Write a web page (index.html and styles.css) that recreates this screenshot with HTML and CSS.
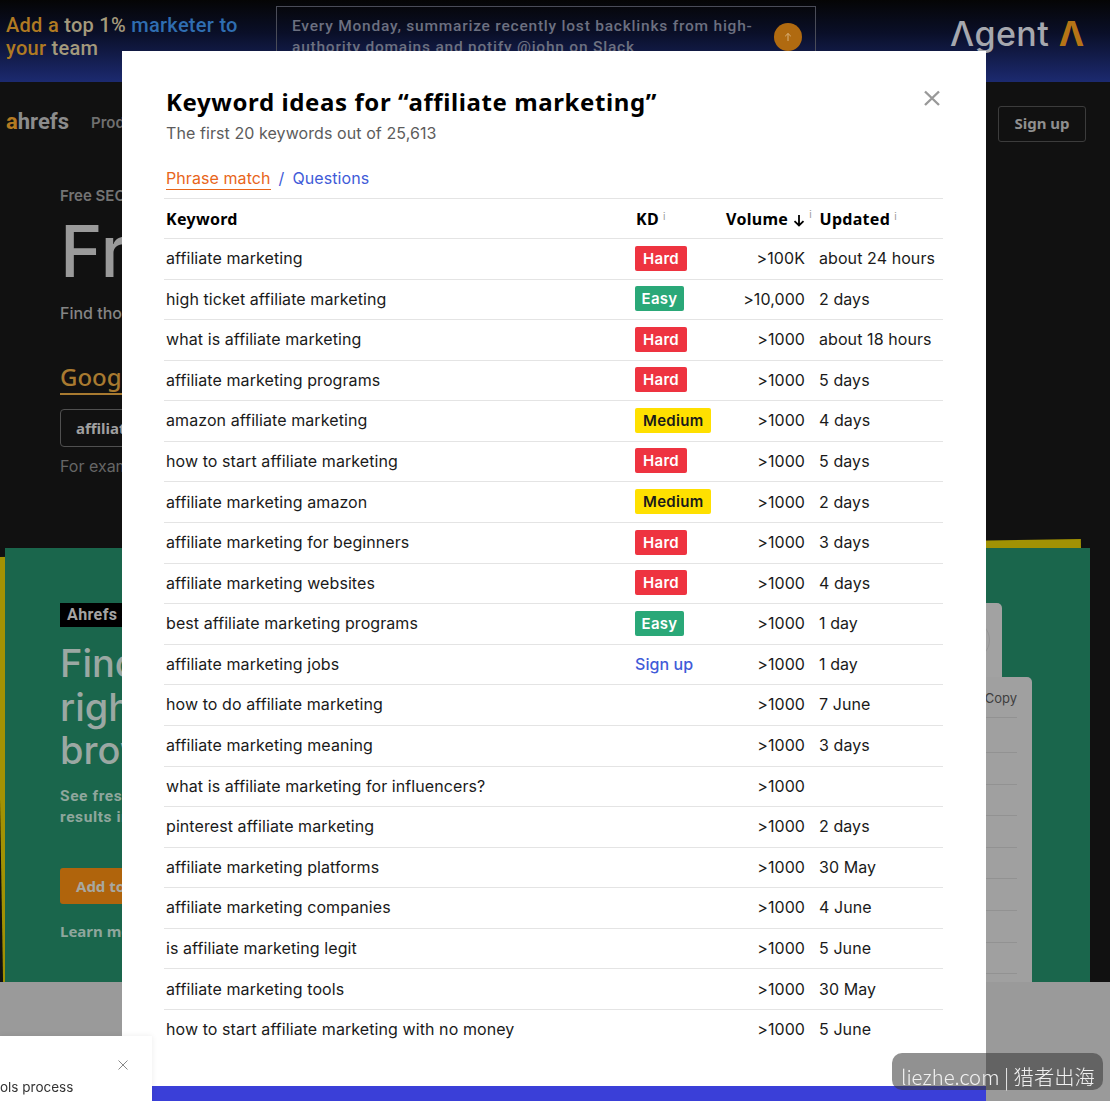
FILE: index.html
```html
<!DOCTYPE html>
<html lang="en">
<head>
<meta charset="utf-8">
<title>Keyword ideas</title>
<link rel="stylesheet" href="styles.css">
</head>
<body>
<div class="page">
  <header class="banner">
    <p class="banner-text"><span class="c-amber">Add a</span> <span class="c-sand">top 1%</span> <span class="c-blue">marketer to</span><br><span class="c-amber">your</span> <span class="c-sand">team</span></p>
    <div class="prompt">
      <p>Every Monday, summarize recently lost backlinks from high-authority domains and notify @john on Slack</p>
      <span class="prompt-send"><svg width="10" height="10" viewBox="0 0 10 10"><path d="M5 9V1.5M2.2 4.2 5 1.5l2.8 2.7" fill="none" stroke="#d9b27a" stroke-width="1"/></svg></span>
    </div>
    <div class="agent"><span>Λgent</span> <span class="agent-mark">Λ</span></div>
  </header>
  <nav class="nav">
    <div class="logo"><span class="logo-a">a</span>hrefs</div>
    <span class="nav-link">Products</span>
    <a class="signup">Sign up</a>
  </nav>
  <section class="hero">
    <p class="eyebrow">Free SEO Tools</p>
    <h1>Free Keyword Generator</h1>
    <p class="lead">Find thousands of keyword ideas</p>
    <div class="tabs"><span class="tab">Google</span></div>
    <div class="search">affiliate marketing</div>
    <p class="hint">For example, enter a word</p>
  </section>
  <section class="promo">
    <div class="promo-back"></div>
    <div class="promo-card">
      <div class="promo-copy">
        <span class="tag">Ahrefs SEO Toolbar</span>
        <h2>Find the<br>right data in<br>browser</h2>
        <p class="promo-text">See fresh data in your<br>results in real time</p>
        <a class="add">Add to Chrome</a>
        <a class="learn">Learn more</a>
      </div>
      <div class="shots">
        <div class="shot-small"><span class="shot-ring"></span></div>
        <div class="shot-large">
          <div class="shot-head">Copy</div>
          <div class="shot-row"></div><div class="shot-row"></div><div class="shot-row"></div><div class="shot-row"></div><div class="shot-row"></div>
          <div class="shot-row"></div><div class="shot-row"></div><div class="shot-row"></div><div class="shot-row"></div>
        </div>
      </div>
    </div>
  </section>
  <div class="footer-band"></div>
</div>

<div class="modal">
  <div class="modal-body">
    <div class="modal-head">
      <div>
        <h3>Keyword ideas for “affiliate marketing”</h3>
        <p class="sub">The first 20 keywords out of 25,613</p>
      </div>
      <svg class="close" width="16" height="16" viewBox="0 0 16 16"><path d="M1 1.5 15 15M15 1.5 1 15" stroke="#999" stroke-width="2.4" fill="none"/></svg>
    </div>
    <div class="filters"><a class="f-active">Phrase match</a><span class="f-sep">/</span><a class="f-link">Questions</a></div>
    <table class="kw">
      <thead>
        <tr><th class="col-k">Keyword</th><th class="col-d">KD<i class="info">i</i></th><th class="col-v">Volume <svg class="sort" width="12" height="13" viewBox="0 0 12 13"><path d="M6 1v10.5M1.5 7.2 6 11.5l4.500-4.300" fill="none" stroke="#000" stroke-width="1.800"/></svg><i class="info abs">i</i></th><th class="col-u">Updated<i class="info">i</i></th></tr>
      </thead>
      <tbody>
        <tr><td>affiliate marketing</td><td><span class="b hard">Hard</span></td><td class="v">&gt;100K</td><td>about 24 hours</td></tr>
        <tr><td>high ticket affiliate marketing</td><td><span class="b easy">Easy</span></td><td class="v">&gt;10,000</td><td>2 days</td></tr>
        <tr><td>what is affiliate marketing</td><td><span class="b hard">Hard</span></td><td class="v">&gt;1000</td><td>about 18 hours</td></tr>
        <tr><td>affiliate marketing programs</td><td><span class="b hard">Hard</span></td><td class="v">&gt;1000</td><td>5 days</td></tr>
        <tr><td>amazon affiliate marketing</td><td><span class="b med">Medium</span></td><td class="v">&gt;1000</td><td>4 days</td></tr>
        <tr><td>how to start affiliate marketing</td><td><span class="b hard">Hard</span></td><td class="v">&gt;1000</td><td>5 days</td></tr>
        <tr><td>affiliate marketing amazon</td><td><span class="b med">Medium</span></td><td class="v">&gt;1000</td><td>2 days</td></tr>
        <tr><td>affiliate marketing for beginners</td><td><span class="b hard">Hard</span></td><td class="v">&gt;1000</td><td>3 days</td></tr>
        <tr><td>affiliate marketing websites</td><td><span class="b hard">Hard</span></td><td class="v">&gt;1000</td><td>4 days</td></tr>
        <tr><td>best affiliate marketing programs</td><td><span class="b easy">Easy</span></td><td class="v">&gt;1000</td><td>1 day</td></tr>
        <tr><td>affiliate marketing jobs</td><td><a class="su">Sign up</a></td><td class="v">&gt;1000</td><td>1 day</td></tr>
        <tr><td>how to do affiliate marketing</td><td></td><td class="v">&gt;1000</td><td>7 June</td></tr>
        <tr><td>affiliate marketing meaning</td><td></td><td class="v">&gt;1000</td><td>3 days</td></tr>
        <tr><td>what is affiliate marketing for influencers?</td><td></td><td class="v">&gt;1000</td><td></td></tr>
        <tr><td>pinterest affiliate marketing</td><td></td><td class="v">&gt;1000</td><td>2 days</td></tr>
        <tr><td>affiliate marketing platforms</td><td></td><td class="v">&gt;1000</td><td>30 May</td></tr>
        <tr><td>affiliate marketing companies</td><td></td><td class="v">&gt;1000</td><td>4 June</td></tr>
        <tr><td>is affiliate marketing legit</td><td></td><td class="v">&gt;1000</td><td>5 June</td></tr>
        <tr><td>affiliate marketing tools</td><td></td><td class="v">&gt;1000</td><td>30 May</td></tr>
        <tr class="last"><td>how to start affiliate marketing with no money</td><td></td><td class="v">&gt;1000</td><td>5 June</td></tr>
      </tbody>
    </table>
  </div>
  <div class="modal-foot"></div>
</div>

<div class="toast">
  <svg class="toast-x" width="10" height="10" viewBox="0 0 10 10"><path d="M.5.5l9 9M9.500.5l-9 9" stroke="#888" stroke-width="1" fill="none"/></svg>
  <p>ols process</p>
</div>
<div class="watermark">liezhe.com | 猎者出海</div>
</body>
</html>
```
FILE: styles.css
```css
* { box-sizing: border-box; }
html, body { margin: 0; height: 1101px; overflow: hidden; }
body { background: #111; font-family: Inter, "Liberation Sans", sans-serif; color: #000; }
p, h1, h2, h3 { margin: 0; }

.page { height: 1101px; overflow: hidden; display: flex; flex-direction: column; }

/* banner */
.banner { height: 82px; flex: none; display: flex; background: linear-gradient(#050505 0, #0a0f28 40%, #1c2a70 100%); position: relative; }
.banner-text { width: 276px; flex: none; padding: 14px 0 0 6px; font: 500 20px/23px Roboto, sans-serif; letter-spacing: .28px; }
.c-amber { color: #b07a22; }
.c-sand { color: #a49a7c; }
.c-blue { color: #2f6db0; }
.prompt { width: 540px; height: 90px; margin-top: 6px; border: 1px solid #4a4c58; padding: 9px 50px 0 15px; position: relative; flex: none; }
.prompt p { font: 500 15.500px/20.500px Roboto, sans-serif; color: #6c7080; letter-spacing: .78px; }
.prompt-send { position: absolute; right: 13px; top: 16px; width: 28px; height: 28px; border-radius: 50%; background: #b06a10; display: flex; align-items: center; justify-content: center; }
.agent { margin-left: 134px; padding-top: 12px; font: 500 34px/44px Inter, sans-serif; color: #a6a8ae; white-space: nowrap; letter-spacing: .4px; }
.agent-mark { color: #b57416; font-weight: 700; }

/* nav */
.nav { height: 75px; flex: none; display: flex; align-items: center; padding: 0 24px 0 6px; position: relative; }
.logo { font: 700 22px/28px Roboto, sans-serif; color: #8c8c8c; width: 85px; margin-top: 5px; }
.logo-a { color: #b47a22; }
.nav-link { font: 600 15px/20px Inter, sans-serif; color: #6f6f6f; margin-top: 7px; }
.signup { margin-left: auto; width: 88px; height: 36px; border: 1px solid #3c3c3c; border-radius: 3px; color: #8f8f8f; font: 700 15px/32px "Noto Sans", sans-serif; text-align: center; margin-top: 9px; }

/* hero */
.hero { height: 391px; flex: none; padding: 29px 0 0 60px; }
.eyebrow { font: 600 15px/20px Inter, sans-serif; color: #747474; }
.hero h1 { font: 500 72px/80px Inter, sans-serif; color: #9a9a9a; margin-top: 5px; white-space: nowrap; }
.lead { font: 500 16px/22px Inter, sans-serif; color: #858585; margin-top: 11px; }
.tabs { margin-top: 38px; }
.tab { display: inline-block; font: 500 24px/30px "Noto Sans", sans-serif; color: #a87a30; border-bottom: 2px solid #a87a30; padding-bottom: 1px; width: 300px; }
.search { width: 400px; height: 38px; margin-top: 14px; border: 1px solid #505050; border-radius: 4px; padding-left: 15px; font: 700 15px/36px "Noto Sans", sans-serif; color: #a0a0a0; }
.hint { font: 400 16px/22px Inter, sans-serif; color: #666; margin-top: 8px; }

/* promo */
.promo { height: 434px; flex: none; position: relative; }
.promo-back { position: absolute; left: -4px; top: 9px; width: 1085px; height: 460px; background: #a19204; transform: rotate(-.95deg); transform-origin: 0 0; }
.promo-card { position: relative; margin: 0 20px 0 5px; height: 434px; background: #1a664c; display: flex; justify-content: space-between; padding: 55px 58px 0 55px; }
.promo-copy { display: flex; flex-direction: column; align-items: flex-start; }
.tag { background: #000; color: #a4a4a4; font: 700 16px/24px Roboto, sans-serif; letter-spacing: .4px; padding: 0 7px; }
.promo h2 { font: 500 38px/43.500px Inter, sans-serif; color: #9ba8a3; margin-top: 15px; }
.promo-text { font: 700 15.500px/21px Roboto, sans-serif; letter-spacing: .6px; color: #8fa69d; margin-top: 13px; }
.add { background: #b0640c; color: #a8a8a0; font: 700 15px/36px "Noto Sans", sans-serif; padding: 0 16px; width: 180px; border-radius: 3px; margin-top: 40px; }
.learn { font: 700 15px/20px "Noto Sans", sans-serif; color: #8fa69d; margin-top: 17px; }
.shots { display: flex; flex-direction: column; align-items: flex-end; width: 400px; }
.shot-small { flex: none; width: 300px; height: 74px; background: #a2a2a2; border-radius: 5px 5px 0 0; margin-right: 30px; display: flex; justify-content: flex-end; align-items: center; padding-right: 12px; }
.shot-ring { width: 40px; height: 40px; border-radius: 50%; border: 1px solid #959595; }
.shot-large { width: 400px; flex: 1; min-height: 0; overflow: hidden; background: #a0a0a0; border-radius: 5px 5px 0 0; padding: 11px 15px 0 0; }
.shot-head { font: 400 13px/20px Inter, sans-serif; color: #3e3e3e; text-align: right; height: 29px; }
.shot-row { height: 31.600px; border-top: 1px solid #929292; margin-left: 40px; }
.shot-head + .shot-row { height: 35px; }

.footer-band { flex: 1; background: #9a9a9a; position: relative; }

/* modal */
.modal { position: fixed; left: 122px; top: 51px; width: 864px; height: 1050px; background: #fff; display: flex; flex-direction: column; letter-spacing: .08px; }
.modal-body { flex: 1; padding: 36px 43px 0 42px; }
.modal-head { display: flex; justify-content: space-between; align-items: flex-start; padding-left: 2px; }
.modal-head h3 { font: 700 24px/30px "Noto Sans", sans-serif; color: #000; letter-spacing: .6px; }
.sub { font: 400 16px/20px Inter, sans-serif; color: #5c5c5c; margin-top: 6px; }
.close { margin: 3px 3px 0 0; }
.filters { margin-top: 25px; height: 30px; padding-left: 2px; font: 400 16px/20px Inter, sans-serif; display: flex; align-items: flex-start; }
.f-active { color: #e8651a; border-bottom: 1px solid #e8651a; padding-bottom: 1px; }
.f-sep { color: #3f5bd8; margin: 0 8px 0 8px; }
.f-link { color: #3f5bd8; }

.kw { width: 779px; border-collapse: collapse; table-layout: fixed; font-size: 16px; }
.kw th { height: 40px; text-align: left; font: 700 16px/20px "Noto Sans", sans-serif; padding: 0 0 0 2px; border-top: 1px solid #e4e4e4; border-bottom: 1px solid #e4e4e4; white-space: nowrap; letter-spacing: .3px; position: relative; }
.kw td { height: 40.580px; padding: 0 0 1.400px 2px; border-bottom: 1px solid #e4e4e4; font-size: 16px; line-height: 20px; color: #1a1a1a; white-space: nowrap; }
.kw .last td { border-bottom: 0; }
.col-k { width: 469px; }
.col-d { width: 80px; }
.col-v { width: 96px; }
.kw th.col-d { padding-left: 3px; }
.kw th.col-v { padding-left: 13px; }
.kw th.col-u { padding-left: 10.500px; }
.kw td:nth-child(2) { padding-left: 2px; }
.kw td.v { text-align: right; padding-right: 4px; }
.kw td:nth-child(4) { padding-left: 10px; }
.info { font: normal 400 10px/10px Inter, sans-serif; color: #999; margin-left: 4px; vertical-align: 5px; }
.info.abs { position: absolute; right: -3px; top: 10px; margin: 0; vertical-align: baseline; }
.sort { vertical-align: -2px; }
.b { display: inline-block; height: 25px; padding: 0 8px; border-radius: 2px; font: 600 15px/25px Inter, sans-serif; letter-spacing: .3px; color: #fff; vertical-align: middle; }
.hard { background: #ee3340; }
.easy { background: #2aa878; padding: 0 6.500px; }
.med { background: #ffe000; color: #1a1a1a; }
.su { color: #3f5bd8; font-weight: 500; }
.modal-foot { height: 15px; flex: none; background: #3a3fd8; }

/* toast */
.toast { position: fixed; left: 0; bottom: 0; width: 152px; height: 65px; background: #fff; box-shadow: 0 0 6px rgba(0,0,0,.08); z-index: 2; }
.toast-x { position: absolute; left: 118px; top: 24px; }
.toast p { padding-top: 42px; font: 400 13.500px/18px Inter, sans-serif; color: #333; }

/* watermark */
.watermark { position: fixed; left: 892px; top: 1053px; width: 211px; height: 37px; border-radius: 10px; background: rgba(55,55,55,.55); color: #f0f0f0; font: 300 20.300px/27px "Noto Sans CJK SC", "Noto Sans", sans-serif; padding: 10px 0 0 9px; white-space: nowrap; z-index: 3; }
```
